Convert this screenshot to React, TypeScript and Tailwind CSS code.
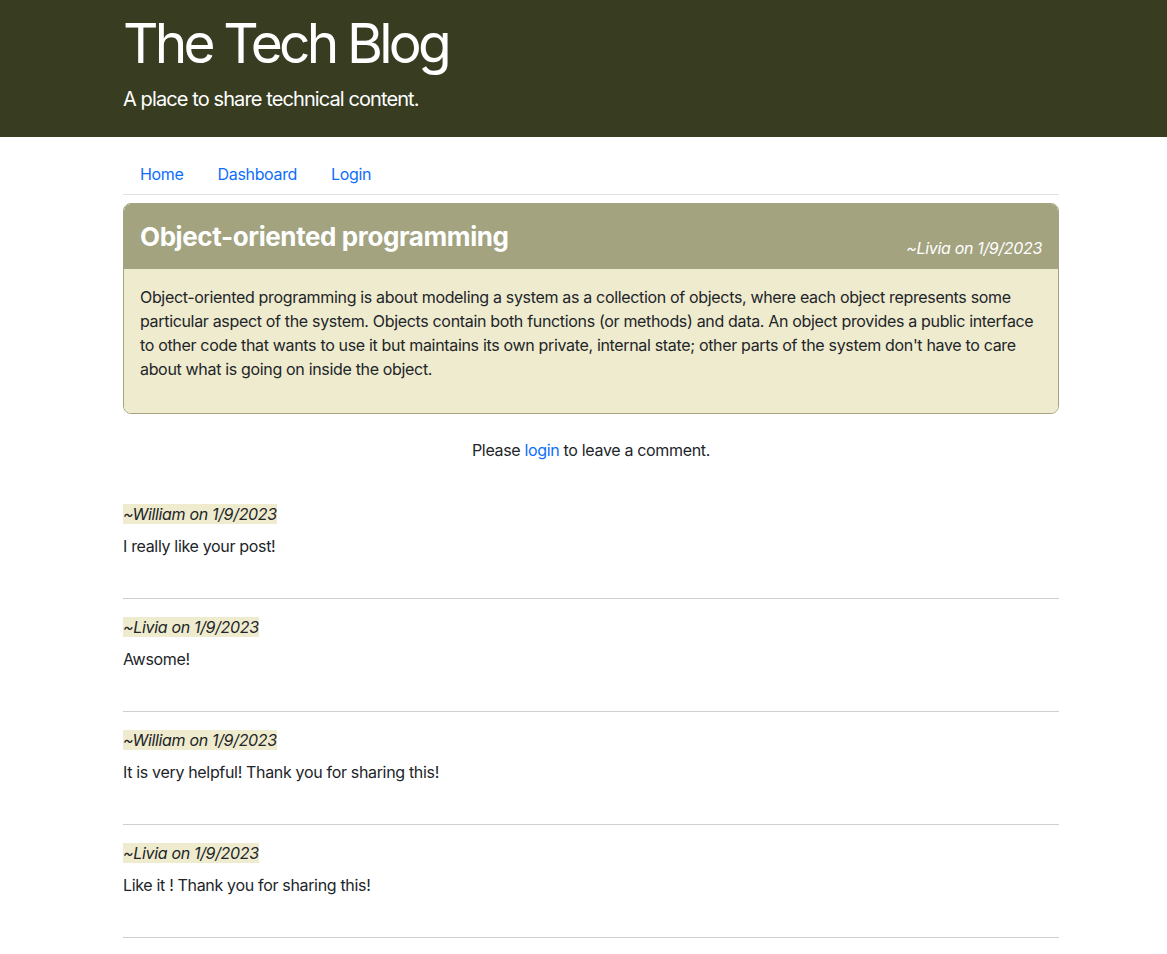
import React from "react";

const comments = [
  { who: "~William on 1/9/2023", text: "I really like your post!" },
  { who: "~Livia on 1/9/2023", text: "Awsome!" },
  { who: "~William on 1/9/2023", text: "It is very helpful! Thank you for sharing this!" },
  { who: "~Livia on 1/9/2023", text: "Like it ! Thank you for sharing this!" },
];

export default function App() {
  return (
    <div className="min-h-[954px] bg-white text-[#212529] font-['Inter',sans-serif] text-[16px] leading-[24px] tracking-[-0.33px]">
      <header className="bg-[#383d22] h-[137px] pt-[10px]">
        <div className="ml-[123px] w-[936px]">
          <h1 className="text-[55px] leading-[66px] font-normal text-white tracking-[-3.8px]">The Tech Blog</h1>
          <p className="mt-[8px] text-[20px] leading-[30px] font-normal text-white tracking-[-0.9px]">A place to share technical content.</p>
        </div>
      </header>
      <div className="ml-[123px] w-[936px]">
        <nav className="flex border-b border-[#dee2e6] pt-[25px] pb-[8px]">
          <a className="px-[17px] text-[#0d6efd]">Home</a>
          <a className="px-[17px] text-[#0d6efd]">Dashboard</a>
          <a className="px-[17px] text-[#0d6efd]">Login</a>
        </nav>
        <div className="mt-[8px] rounded-[8px] border border-[#a3a380] overflow-hidden">
          <div className="bg-[#a3a380] h-[65px] px-[16px] flex items-end justify-between text-white pb-[9px]">
            <h2 className="text-[26px] leading-[32px] font-bold mb-[7px] tracking-[-0.4px]">Object-oriented programming</h2>
            <span className="italic">~Livia on 1/9/2023</span>
          </div>
          <div className="bg-[#efebce] px-[16px] pt-[16px] pb-[32px]">
            <p>
              Object-oriented programming is about modeling a system as a collection of objects, where each object represents some particular aspect of the system. Objects contain both functions (or methods) and data. An object provides a public interface to other code that wants to use it but maintains its own private, internal state; other parts of the system don't have to care about what is going on inside the object.
            </p>
          </div>
        </div>
        <p className="text-center mt-[24px]">
          Please <a className="text-[#0d6efd]">login</a> to leave a comment.
        </p>
        <div className="mt-[40px]">
          {comments.map((c, i) => (
            <div key={i} className={i > 0 ? "pt-[16px]" : ""}>
              <p><span className="italic bg-[#efebce]">{c.who}</span></p>
              <p className="mt-[8px]">{c.text}</p>
              <hr className="mt-[40px] border-0 border-t border-[#cfcfcf]" />
            </div>
          ))}
        </div>
      </div>
    </div>
  );
}
